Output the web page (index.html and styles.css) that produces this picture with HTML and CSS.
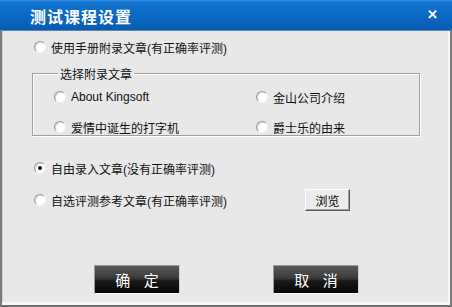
FILE: index.html
```html
<!DOCTYPE html>
<html lang="zh-CN">
<head>
  <meta charset="UTF-8">
  <title>测试课程设置</title>
  <link rel="stylesheet" href="styles.css">
</head>
<body>
  <div class="dialog">
    <div class="titlebar">
      <span class="title">测试课程设置</span>
      <span class="close">&#x2715;</span>
    </div>
    <div class="content">
      <label class="option top">
        <span class="radio"></span>使用手册附录文章(有正确率评测)
      </label>

      <fieldset class="group">
        <legend>选择附录文章</legend>
        <div class="grid">
          <label class="option"><span class="radio"></span>About Kingsoft</label>
          <label class="option"><span class="radio"></span>金山公司介绍</label>
          <label class="option"><span class="radio"></span>爱情中诞生的打字机</label>
          <label class="option"><span class="radio"></span>爵士乐的由来</label>
        </div>
      </fieldset>

      <label class="option free">
        <span class="radio checked"></span>自由录入文章(没有正确率评测)
      </label>
      <div class="row">
        <label class="option">
          <span class="radio"></span>自选评测参考文章(有正确率评测)
        </label>
        <button class="browse">浏览</button>
      </div>

      <div class="actions">
        <button class="dark-btn">确&nbsp;&nbsp;&nbsp;&nbsp;定</button>
        <button class="dark-btn">取&nbsp;&nbsp;&nbsp;&nbsp;消</button>
      </div>
    </div>
  </div>
</body>
</html>
```

FILE: styles.css
```css
* {
  margin: 0;
  padding: 0;
  box-sizing: border-box;
}

body {
  width: 452px;
  height: 307px;
  overflow: hidden;
  background: #e8e8e8;
  font-family: "Liberation Sans", "Noto Sans CJK SC", sans-serif;
  font-size: 12px;
  color: #111;
}

.dialog {
  width: 452px;
  height: 307px;
  display: flex;
  flex-direction: column;
}

.titlebar {
  height: 31px;
  background: linear-gradient(#3a92e4 0, #1275d2 2px, #0b68c3 50%, #085cb2 100%);
  border-bottom: 1px solid #5a86b4;
  display: flex;
  align-items: center;
  justify-content: space-between;
  padding: 2px 14px 0 30px;
  color: #fff;
}

.title {
  font-family: "Noto Sans CJK SC", sans-serif;
  font-size: 16px;
  font-weight: bold;
  letter-spacing: 1px;
}

.close {
  font-size: 13px;
  font-weight: bold;
  margin-top: -4px;
}

.content {
  flex: 1;
  border-left: 2px solid #7a7a7a;
  border-right: 2px solid #7a7a7a;
  border-bottom: 2px solid #6e6e6e;
  box-shadow: inset -2px -3px 0 #f6f6f6, inset 1px 0 0 #cfcfcf;
  padding: 8px 0 0 30px;
  display: flex;
  flex-direction: column;
}

.option {
  display: flex;
  align-items: center;
  height: 16px;
  white-space: nowrap;
}

.radio {
  width: 12px;
  height: 12px;
  border-radius: 50%;
  background: #fff;
  border: 1px solid #9a9a9a;
  border-right-color: #f2f2f2;
  border-bottom-color: #f2f2f2;
  box-shadow: inset 1px 1px 0 #d8d8d8;
  margin-right: 5px;
  position: relative;
}

.radio.checked::after {
  content: "";
  position: absolute;
  left: 3px;
  top: 3px;
  width: 4px;
  height: 4px;
  border-radius: 50%;
  background: #000;
}

.top {
  margin-left: 2px;
}

.group {
  margin-top: 10px;
  width: 388px;
  height: 71px;
  border: 1px solid #a0a0a0;
  box-shadow: 1px 1px 0 #fff, inset 1px 1px 0 #fff;
  padding: 0 0 0 21px;
}

.group legend {
  padding: 0 2px;
  margin-left: 4px;
  font-size: 12px;
}

.grid {
  display: grid;
  grid-template-columns: 202px 1fr;
  row-gap: 14px;
  margin-top: 7px;
}

.free {
  margin-top: 24px;
  margin-left: 2px;
}

.row {
  display: flex;
  align-items: center;
  margin-top: 13px;
  margin-left: 2px;
}

.browse {
  margin-left: 78px;
  width: 45px;
  height: 22px;
  font-family: "Noto Sans CJK SC", sans-serif;
  font-size: 12px;
  background: #ececec;
  border: 1px solid;
  border-color: #fff #555 #555 #fff;
  box-shadow: inset -1px -1px 0 #a0a0a0;
}

.actions {
  display: flex;
  gap: 93px;
  margin: auto 0 11px 62px;
}

.dark-btn {
  width: 86px;
  height: 29px;
  color: #fff;
  font-family: "Noto Sans CJK SC", sans-serif;
  font-size: 15px;
  background: linear-gradient(#5a5a5a 0, #3a3a3a 45%, #1a1a1a 55%, #050505 100%);
  border: 1px solid #9a9a9a;
  border-bottom-color: #fff;
  border-right-color: #d0d0d0;
}
```
